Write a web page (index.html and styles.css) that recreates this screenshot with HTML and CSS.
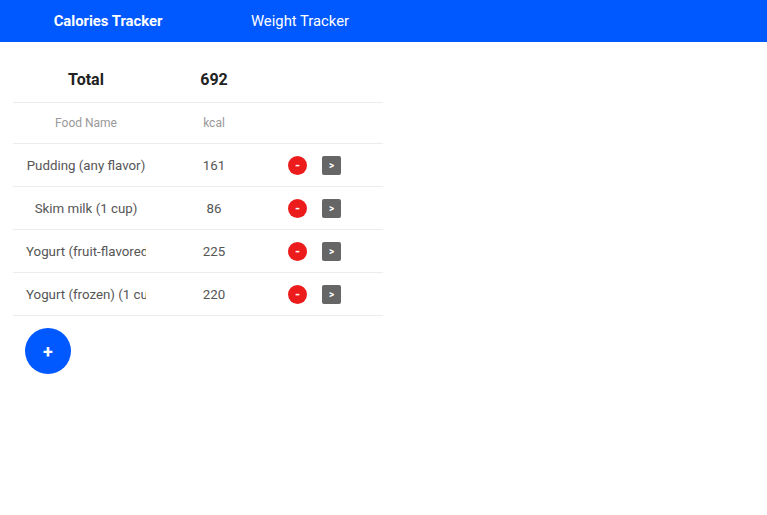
FILE: index.html
```html
<!DOCTYPE html>
<html>
<head>
<meta charset="utf-8">
<link rel="stylesheet" href="styles.css">
</head>
<body>
<nav class="tabs">
  <div class="tab active">Calories Tracker</div>
  <div class="tab">Weight Tracker</div>
</nav>
<main class="content">
  <div class="table">
    <div class="row total">
      <div class="cell name">Total</div>
      <div class="cell kcal">692</div>
      <div class="cell actions"></div>
    </div>
    <div class="row head">
      <div class="cell name">Food Name</div>
      <div class="cell kcal">kcal</div>
      <div class="cell actions"></div>
    </div>
    <div class="row item">
      <div class="cell name">Pudding (any flavor)</div>
      <div class="cell kcal">161</div>
      <div class="cell actions"><button class="btn-del">-</button><button class="btn-go">&gt;</button></div>
    </div>
    <div class="row item">
      <div class="cell name">Skim milk (1 cup)</div>
      <div class="cell kcal">86</div>
      <div class="cell actions"><button class="btn-del">-</button><button class="btn-go">&gt;</button></div>
    </div>
    <div class="row item">
      <div class="cell name">Yogurt (fruit-flavored)</div>
      <div class="cell kcal">225</div>
      <div class="cell actions"><button class="btn-del">-</button><button class="btn-go">&gt;</button></div>
    </div>
    <div class="row item">
      <div class="cell name">Yogurt (frozen) (1 cup)</div>
      <div class="cell kcal">220</div>
      <div class="cell actions"><button class="btn-del">-</button><button class="btn-go">&gt;</button></div>
    </div>
  </div>
  <button class="fab">+</button>
</main>
</body>
</html>
```
FILE: styles.css
```css
* { box-sizing: border-box; }
body {
  margin: 0;
  font-family: Roboto, "Liberation Sans", sans-serif;
  background: #fff;
}
.tabs {
  display: flex;
  height: 42px;
  background: #0058ff;
  padding-left: 12px;
}
.tab {
  width: 192px;
  display: flex;
  align-items: center;
  justify-content: center;
  color: #fff;
  font-size: 14.8px;
}
.tab.active { font-weight: 700; }
.content {
  padding: 16px 0 0 13px;
}
.table { width: 370px; }
.row {
  display: grid;
  grid-template-columns: 146px 110px 114px;
  align-items: center;
  border-bottom: 1px solid #ececec;
}
.row.total { height: 45px; padding-bottom: 2px; }
.row.head { height: 41px; }
.row.item { height: 43px; }
.cell {
  text-align: center;
  white-space: nowrap;
  overflow: hidden;
}
.cell.name { margin: 0 13px; }
.total .cell {
  font-size: 16px;
  font-weight: 700;
  color: #222;
}
.head .cell {
  font-size: 12px;
  color: #999;
}
.item .cell {
  font-size: 13.3px;
  color: #555;
}
.cell.actions {
  display: flex;
  align-items: center;
  gap: 15px;
  padding-left: 19px;
}
.btn-del {
  width: 19px;
  height: 19px;
  border-radius: 50%;
  background: #ed1c1c;
  border: none;
  color: #fff;
  font-size: 13px;
  font-weight: 700;
  padding: 0;
  display: flex;
  align-items: center;
  justify-content: center;
  font-family: Roboto, sans-serif;
}
.btn-go {
  width: 19px;
  height: 19px;
  border-radius: 2px;
  background: #666;
  border: none;
  color: #fff;
  font-size: 10px;
  font-weight: 700;
  padding: 0;
  display: flex;
  align-items: center;
  justify-content: center;
  font-family: Roboto, sans-serif;
}
.fab {
  margin: 12px 0 0 12px;
  width: 46px;
  height: 46px;
  border-radius: 50%;
  background: #0058ff;
  border: none;
  color: #fff;
  font-size: 18px;
  font-weight: 700;
  display: flex;
  align-items: center;
  justify-content: center;
  font-family: Roboto, sans-serif;
  padding: 0;
}
```
